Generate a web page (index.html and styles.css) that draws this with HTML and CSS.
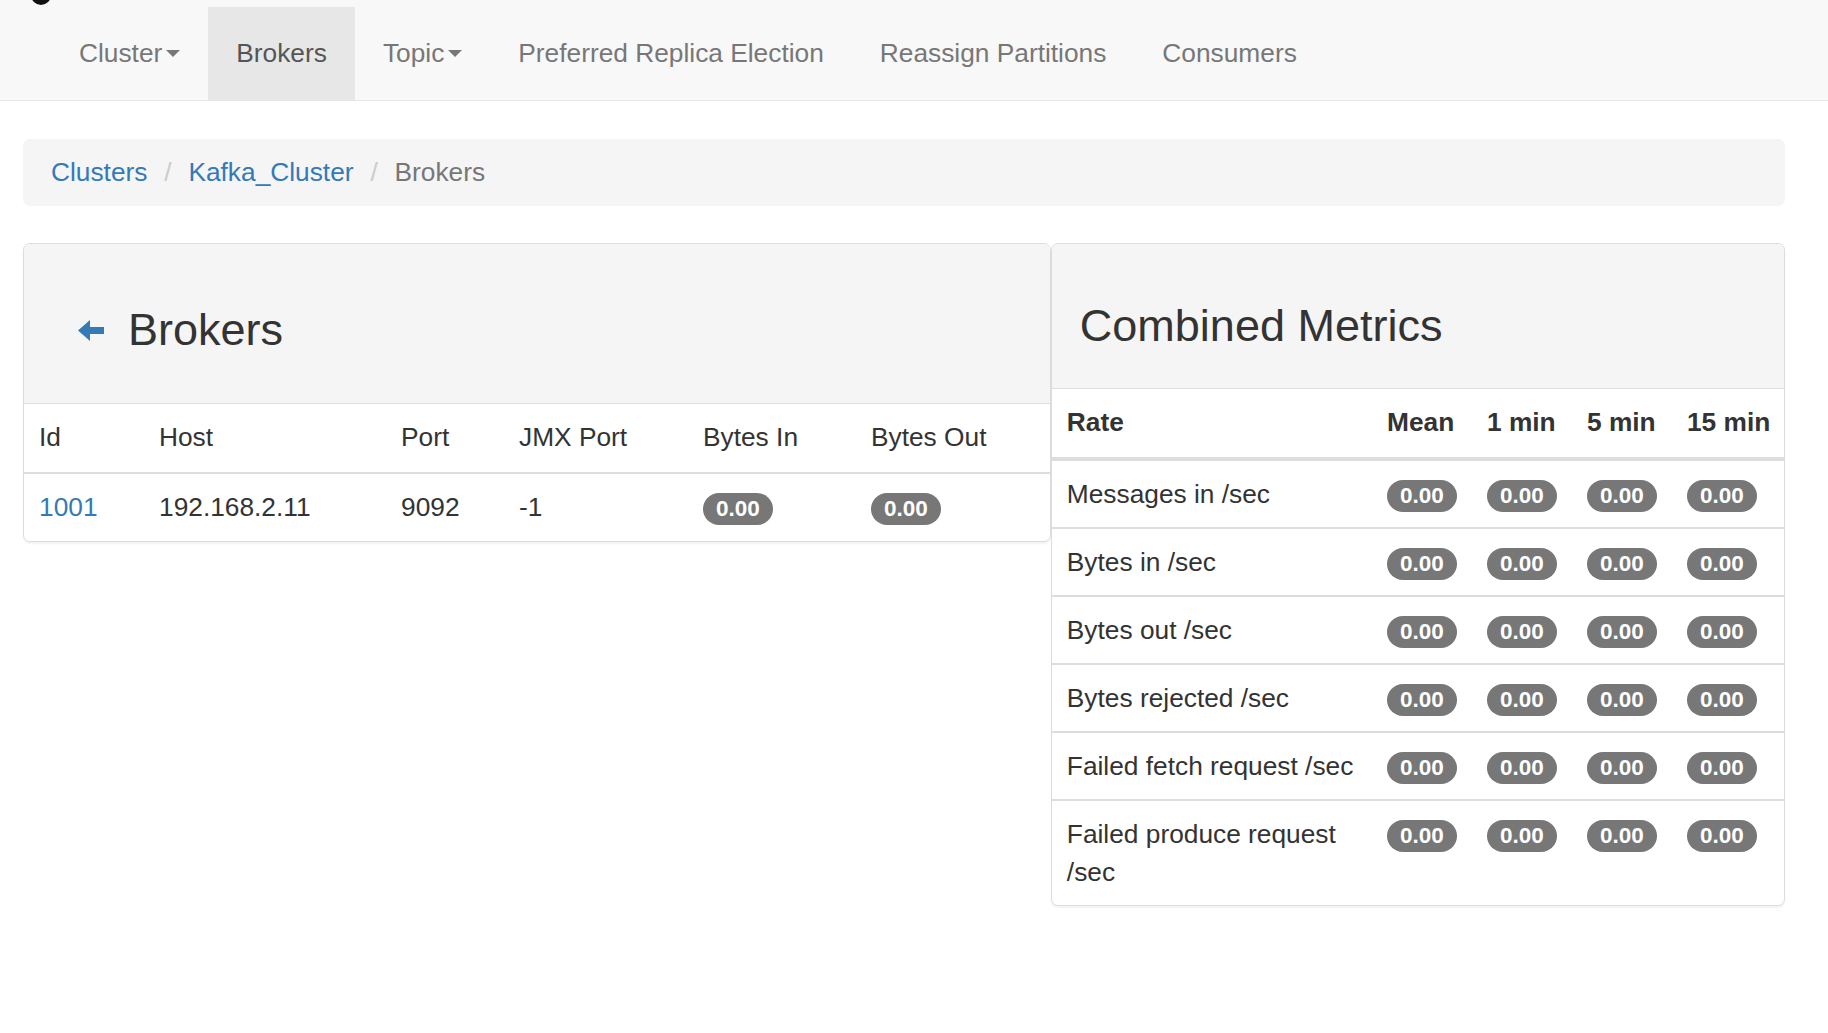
FILE: index.html
```html
<!DOCTYPE html>
<html lang="en">
<head>
<meta charset="utf-8">
<title>Brokers</title>
<link rel="stylesheet" href="styles.css">
</head>
<body>
<nav class="navbar">
  <span class="brand-logo"></span>
  <ul class="nav-links">
    <li><a href="#">Cluster<span class="caret"></span></a></li>
    <li class="active"><a href="#">Brokers</a></li>
    <li><a href="#">Topic<span class="caret"></span></a></li>
    <li><a href="#">Preferred Replica Election</a></li>
    <li><a href="#">Reassign Partitions</a></li>
    <li><a href="#">Consumers</a></li>
  </ul>
</nav>

<div class="container">
  <ol class="breadcrumb">
    <li><a href="#">Clusters</a></li>
    <li><a href="#">Kafka_Cluster</a></li>
    <li class="current">Brokers</li>
  </ol>

  <div class="row">
    <div class="panel">
      <div class="panel-heading panel-heading-brokers">
        <h3><svg class="back-arrow" width="26" height="21" viewBox="0 0 26 21"><path d="M0 10.5 L12 0 L12 7 L26 7 L26 14 L12 14 L12 21 Z" fill="#337ab7"/></svg>Brokers</h3>
      </div>
      <table class="table brokers-table">
        <thead>
          <tr>
            <th class="c-id">Id</th>
            <th class="c-host">Host</th>
            <th class="c-port">Port</th>
            <th class="c-jmx">JMX Port</th>
            <th class="c-in">Bytes In</th>
            <th class="c-out">Bytes Out</th>
          </tr>
        </thead>
        <tbody>
          <tr>
            <td><a href="#">1001</a></td>
            <td>192.168.2.11</td>
            <td>9092</td>
            <td>-1</td>
            <td><span class="badge">0.00</span></td>
            <td><span class="badge">0.00</span></td>
          </tr>
        </tbody>
      </table>
    </div>

    <div class="panel">
      <div class="panel-heading">
        <h3>Combined Metrics</h3>
      </div>
      <table class="table metrics-table">
        <thead>
          <tr>
            <th class="c-rate">Rate</th>
            <th class="c-num">Mean</th>
            <th class="c-num">1 min</th>
            <th class="c-num">5 min</th>
            <th class="c-wide">15 min</th>
          </tr>
        </thead>
        <tbody>
          <tr><td>Messages in /sec</td><td><span class="badge">0.00</span></td><td><span class="badge">0.00</span></td><td><span class="badge">0.00</span></td><td><span class="badge">0.00</span></td></tr>
          <tr><td>Bytes in /sec</td><td><span class="badge">0.00</span></td><td><span class="badge">0.00</span></td><td><span class="badge">0.00</span></td><td><span class="badge">0.00</span></td></tr>
          <tr><td>Bytes out /sec</td><td><span class="badge">0.00</span></td><td><span class="badge">0.00</span></td><td><span class="badge">0.00</span></td><td><span class="badge">0.00</span></td></tr>
          <tr><td>Bytes rejected /sec</td><td><span class="badge">0.00</span></td><td><span class="badge">0.00</span></td><td><span class="badge">0.00</span></td><td><span class="badge">0.00</span></td></tr>
          <tr><td>Failed fetch request /sec</td><td><span class="badge">0.00</span></td><td><span class="badge">0.00</span></td><td><span class="badge">0.00</span></td><td><span class="badge">0.00</span></td></tr>
          <tr><td>Failed produce request /sec</td><td><span class="badge">0.00</span></td><td><span class="badge">0.00</span></td><td><span class="badge">0.00</span></td><td><span class="badge">0.00</span></td></tr>
        </tbody>
      </table>
    </div>
  </div>
</div>
</body>
</html>
```

FILE: styles.css
```css
* {
  box-sizing: border-box;
}

html, body {
  margin: 0;
  padding: 0;
  background: #fff;
}

body {
  font-family: "Liberation Sans", Arial, Helvetica, sans-serif;
  font-size: 26.3px;
  line-height: 37.5px;
  color: #333;
}

a {
  text-decoration: none;
  color: #337ab7;
}

/* ---------- navbar ---------- */
.navbar {
  display: flex;
  align-items: flex-start;
  height: 101px;
  background: #f8f8f8;
  border-bottom: 1px solid #e7e7e7;
  overflow: hidden;
}

.brand-logo {
  display: block;
  width: 20px;
  height: 20px;
  margin: -15px 0 0 31px;
  border-radius: 50%;
  background: #111;
}

.nav-links {
  display: flex;
  list-style: none;
  margin: 7px 0 0 0;
  padding: 0;
}

.nav-links a {
  display: block;
  padding: 28px 28px 27.5px;
  color: #777;
}

.nav-links .active a {
  background: #e7e7e7;
  color: #555;
}

.caret {
  display: inline-block;
  width: 0;
  height: 0;
  margin-left: 4px;
  vertical-align: middle;
  position: relative;
  top: -2px;
  border-top: 7px solid #777;
  border-left: 7.5px solid transparent;
  border-right: 7.5px solid transparent;
}

/* ---------- container ---------- */
.container {
  padding: 0 43px 40px 23px;
}

.breadcrumb {
  margin: 38px 0 37px 0;
  padding: 15px 28px 14.5px;
  list-style: none;
  background: #f5f5f5;
  border-radius: 7px;
}

.breadcrumb li {
  display: inline-block;
}

.breadcrumb li + li::before {
  content: "/\00a0";
  padding: 0 9.5px;
  color: #ccc;
}

.breadcrumb .current {
  color: #777;
}

.row {
  display: grid;
  grid-template-columns: 7fr 5fr;
  align-items: start;
}

/* ---------- panels ---------- */
.panel {
  background: #fff;
  border: 1px solid #ddd;
  border-radius: 7px;
  box-shadow: 0 2px 2px rgba(0, 0, 0, 0.05);
  overflow: hidden;
}

.panel-heading {
  background: #f5f5f5;
  border-bottom: 1px solid #ddd;
  padding: 19px 28px;
}

.panel-heading h3 {
  margin: 38px 0 19px 0;
  font-size: 45px;
  line-height: 49px;
  font-weight: 500;
  color: #333;
}

.panel-heading-brokers {
  padding: 61px 28px 49px 54px;
}

.panel-heading-brokers h3 {
  margin: 0;
}

.back-arrow {
  display: inline-block;
  vertical-align: 4px;
  margin-right: 24px;
}

/* ---------- tables ---------- */
.table {
  width: 100%;
  border-collapse: separate;
  border-spacing: 0;
  table-layout: fixed;
}

.table th,
.table td {
  text-align: left;
  vertical-align: top;
  padding: 15px 15px 13.5px 15px;
  white-space: nowrap;
}

.brokers-table th {
  font-weight: normal;
  padding-bottom: 15px;
}

.brokers-table td {
  border-top: 2px solid #ddd;
  padding-bottom: 14.5px;
}

.c-id { width: 120px; }
.c-host { width: 242px; }
.c-port { width: 118px; }
.c-jmx { width: 184px; }
.c-in { width: 168px; }

.metrics-table th {
  font-weight: bold;
  padding-bottom: 15.5px;
  border-bottom: 4px solid #ddd;
}

.metrics-table td {
  border-top: 2px solid #ddd;
}

.metrics-table tbody tr:first-child td {
  border-top: 0;
}

.metrics-table td:first-child {
  white-space: normal;
}

.c-num { width: 100px; }
.c-wide { width: 112px; }

.badge {
  display: inline-block;
  min-width: 20px;
  padding: 5px 13px;
  font-size: 22.5px;
  font-weight: bold;
  line-height: 22px;
  color: #fff;
  text-align: center;
  white-space: nowrap;
  vertical-align: middle;
  background-color: #777;
  border-radius: 16px;
}
```
